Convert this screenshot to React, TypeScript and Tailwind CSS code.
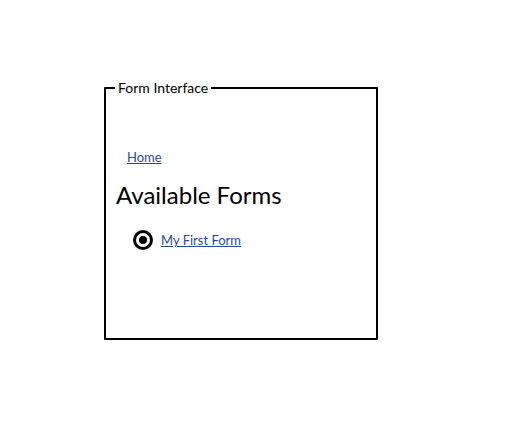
import React from "react";

export default function App() {
  return (
    <div className="w-[510px] h-[433px] bg-white relative" style={{ fontFamily: "Lato, 'Noto Sans', sans-serif" }}>
      <div className="pt-[80px] pl-[104px]">
        <fieldset className="w-[274px] h-[260px] border-2 border-black rounded-[1px] m-0 p-0">
          <legend className="ml-[9px] px-[3px] text-[14px] leading-[16px] text-black">Form Interface</legend>
          <div className="pl-[21px] pt-[48px]">
            <a href="#" className="text-[13px] leading-[16px] text-[#2a4aa0] underline">Home</a>
          </div>
          <h1 className="pl-[10px] mt-[13px] text-[24px] leading-[28px] text-black">Available Forms</h1>
          <div className="pl-[27px] mt-[21px] flex items-center gap-[8px]">
            <svg width="20" height="20" viewBox="0 0 20 20">
              <circle cx="10" cy="10" r="8.5" fill="none" stroke="black" strokeWidth="3" />
              <circle cx="10" cy="10" r="4" fill="black" />
            </svg>
            <a href="#" className="text-[13px] leading-[16px] text-[#2a4aa0] underline">My First Form</a>
          </div>
        </fieldset>
      </div>
    </div>
  );
}
